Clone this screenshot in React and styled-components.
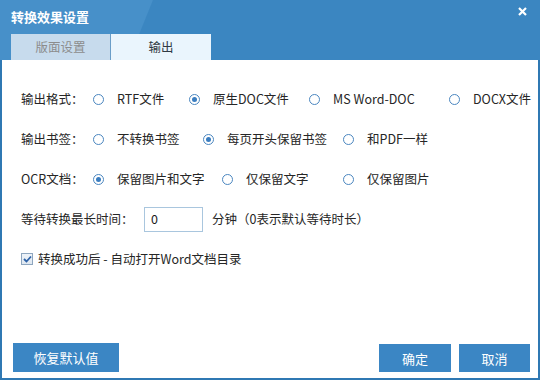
import styled, { createGlobalStyle } from 'styled-components'

const Global = createGlobalStyle`
  html, body { margin: 0; padding: 0; background: #fff; }
  body { font-family: "Noto Sans CJK SC", "Noto Sans", sans-serif; }
`;

const Window = styled.div`
  width: 540px;
  height: 380px;
  box-sizing: border-box;
  border: 2px solid #2f78b3;
  border-top: none;
  display: flex;
  flex-direction: column;
  background: #fff;
`;

const TitleBar = styled.div`
  height: 60px;
  margin: 0 -2px;
  padding: 0 13px 0 11px;
  box-sizing: border-box;
  background: linear-gradient(112deg, #4790c9 0%, #4790c9 27%, #3b86c1 27.2%, #3b86c1 100%);
  display: flex;
  flex-direction: column;
  justify-content: space-between;
`;

const TitleRow = styled.div`
  height: 31px;
  display: flex;
  align-items: center;
  justify-content: space-between;
`;

const Title = styled.div`
  color: #fff;
  font-size: 13px;
  font-weight: bold;
  line-height: 1;
  padding-top: 1px;
`;

const Close = styled.svg`
  width: 9px;
  height: 9px;
  margin-top: -8px;
`;

const Tabs = styled.div`
  display: flex;
  height: 26px;
`;

const Tab = styled.div`
  width: 100px;
  display: flex;
  align-items: center;
  justify-content: center;
  font-size: 12.5px;
  line-height: 1;
  background: ${p => (p.$active ? '#eaf5fd' : '#c7dbed')};
  color: ${p => (p.$active ? '#2f3a44' : '#8c8c8c')};
  border-right: ${p => (p.$active ? 'none' : '1px solid #6a9dc8')};
  box-sizing: border-box;
`;

const Body = styled.div`
  flex: 1;
  display: flex;
  flex-direction: column;
  padding: 27px 8px 6px 19px;
`;

const Form = styled.div`
  display: flex;
  flex-direction: column;
  gap: 16px;
`;

const Row = styled.div`
  height: 24px;
  display: flex;
  align-items: center;
  font-size: 12.5px;
  color: #262626;
  line-height: 1;
`;

const Label = styled.span`
  width: ${p => p.$w}px;
  flex-shrink: 0;
`;

const Option = styled.label`
  width: ${p => p.$w}px;
  flex-shrink: 0;
  display: flex;
  align-items: center;
  gap: 13px;
  white-space: nowrap;
`;

const Radio = styled.span`
  width: 11px;
  height: 11px;
  box-sizing: border-box;
  border-radius: 50%;
  border: 1.5px solid #4a86c0;
  background: #fff;
  display: flex;
  align-items: center;
  justify-content: center;
  flex-shrink: 0;
  &::after {
    content: '';
    width: 5px;
    height: 5px;
    border-radius: 50%;
    background: ${p => (p.$on ? '#3a7dc0' : 'transparent')};
  }
`;

const NumInput = styled.div`
  width: 59px;
  height: 25px;
  box-sizing: border-box;
  border: 1px solid #a9c6de;
  display: flex;
  align-items: center;
  padding-left: 6px;
  margin-right: 9px;
  color: #1a1a1a;
`;

const Check = styled.span`
  width: 12px;
  height: 12px;
  box-sizing: border-box;
  border: 1px solid #8ea6bf;
  background: linear-gradient(#eef3f8, #dfe8f1);
  display: flex;
  align-items: center;
  justify-content: center;
  margin-right: 5px;
`;

const Footer = styled.div`
  margin-top: auto;
  margin-left: -8px;
  display: flex;
  align-items: flex-end;
  justify-content: space-between;
`;

const Button = styled.button`
  width: ${p => p.$w}px;
  height: ${p => p.$h}px;
  border: none;
  background: #3b86c4;
  color: #fff;
  font-family: inherit;
  font-size: 13px;
  padding: 0;
  cursor: pointer;
`;

const RightButtons = styled.div`
  display: flex;
  gap: 8px;
`;

export default function App() {
  return (
    <>
      <Global />
      <Window>
        <TitleBar>
          <TitleRow>
            <Title>转换效果设置</Title>
            <Close viewBox="0 0 9 9">
              <path d="M1 1 L8 8 M8 1 L1 8" stroke="#fff" strokeWidth="2.2" />
            </Close>
          </TitleRow>
          <Tabs>
            <Tab>版面设置</Tab>
            <Tab $active>输出</Tab>
          </Tabs>
        </TitleBar>
        <Body>
          <Form>
            <Row>
              <Label $w={72}>输出格式：</Label>
              <Option $w={96}><Radio />RTF文件</Option>
              <Option $w={120}><Radio $on />原生DOC文件</Option>
              <Option $w={140}><Radio />MS Word-DOC</Option>
              <Option $w={90}><Radio />DOCX文件</Option>
            </Row>
            <Row>
              <Label $w={72}>输出书签：</Label>
              <Option $w={110}><Radio />不转换书签</Option>
              <Option $w={140}><Radio $on />每页开头保留书签</Option>
              <Option $w={100}><Radio />和PDF一样</Option>
            </Row>
            <Row>
              <Label $w={72}>OCR文档：</Label>
              <Option $w={129}><Radio $on />保留图片和文字</Option>
              <Option $w={121}><Radio />仅保留文字</Option>
              <Option $w={100}><Radio />仅保留图片</Option>
            </Row>
            <Row>
              <Label $w={123}>等待转换最长时间：</Label>
              <NumInput>0</NumInput>
              <span>分钟（0表示默认等待时长）</span>
            </Row>
            <Row>
              <Check>
                <svg width="9" height="8" viewBox="0 0 9 8">
                  <path d="M1 4 L3.5 6.5 L8 1.5" fill="none" stroke="#2d62a8" strokeWidth="1.8" />
                </svg>
              </Check>
              转换成功后 - 自动打开Word文档目录
            </Row>
          </Form>
          <Footer>
            <Button $w={106} $h={29} style={{ marginBottom: 0 }}>恢复默认值</Button>
            <RightButtons>
              <Button $w={72} $h={28}>确定</Button>
              <Button $w={71} $h={28}>取消</Button>
            </RightButtons>
          </Footer>
        </Body>
      </Window>
    </>
  )
}
